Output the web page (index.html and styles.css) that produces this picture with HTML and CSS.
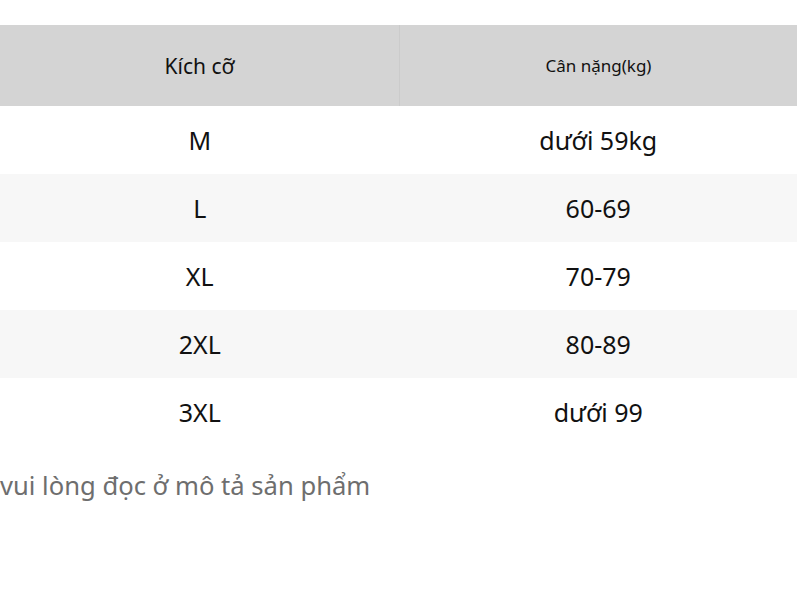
FILE: index.html
```html
<!DOCTYPE html>
<html lang="vi">
<head>
<meta charset="utf-8">
<title>Bảng kích cỡ</title>
<link rel="stylesheet" href="styles.css">
</head>
<body>
<div class="page">
  <table class="size-table">
    <thead>
      <tr>
        <th class="col-size">Kích cỡ</th>
        <th class="col-weight">Cân nặng(kg)</th>
      </tr>
    </thead>
    <tbody>
      <tr><td>M</td><td>dưới 59kg</td></tr>
      <tr class="alt"><td>L</td><td>60-69</td></tr>
      <tr><td>XL</td><td>70-79</td></tr>
      <tr class="alt"><td>2XL</td><td>80-89</td></tr>
      <tr><td>3XL</td><td>dưới 99</td></tr>
    </tbody>
  </table>
  <p class="note">vui lòng đọc ở mô tả sản phẩm</p>
</div>
</body>
</html>
```
FILE: styles.css
```css
html, body {
  margin: 0;
  padding: 0;
  background: #ffffff;
}
body {
  font-family: "Noto Sans", "Open Sans", "DejaVu Sans", sans-serif;
  color: #111111;
}
.page {
  padding-top: 25px;
}
.size-table {
  width: 797px;
  border-collapse: collapse;
  table-layout: fixed;
}
.size-table th {
  background: #d4d4d4;
  font-weight: 400;
  height: 81px;
  padding: 0;
  text-align: center;
  vertical-align: middle;
  color: #111111;
}
.size-table th.col-size {
  width: 399px;
  font-size: 21px;
  border-right: 1px solid #cbcbcb;
}
.size-table th.col-weight {
  font-size: 17px;
}
.size-table td {
  height: 68px;
  padding: 0;
  text-align: center;
  vertical-align: middle;
  font-size: 25px;
  background: #ffffff;
}
.size-table tr.alt td {
  background: #f7f7f7;
}
.note {
  margin: 22px 0 0 0;
  font-size: 25.6px;
  color: #6e6e6e;
  line-height: 36px;
}
```
